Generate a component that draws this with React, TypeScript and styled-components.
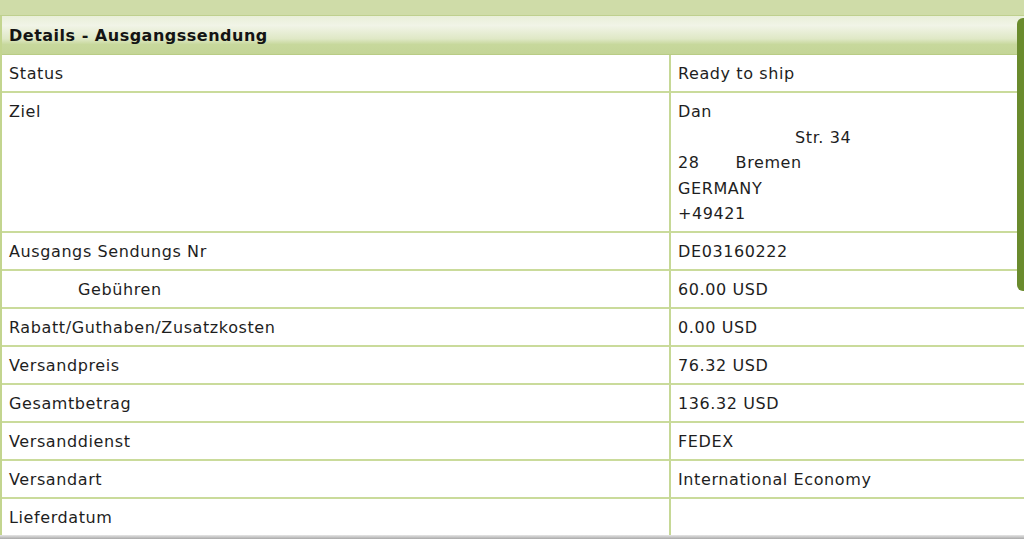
import { Fragment } from "react";
import styled, { createGlobalStyle } from "styled-components";

const GlobalStyle = createGlobalStyle`
  html, body {
    margin: 0;
    padding: 0;
    background-color: #cfdca8;
  }
  #root {
    height: 539px;
  }
`;

const Page = styled.div`
  height: 539px;
  display: flex;
  flex-direction: column;
  overflow: hidden;
  font-family: "DejaVu Sans", Verdana, sans-serif;
  color: #1e1e1e;
`;

const TopBand = styled.div`
  height: 15px;
  flex-shrink: 0;
  background-color: #cfdca8;
  border-bottom: 1px solid #bfd08e;
`;

const Panel = styled.div`
  position: relative;
  flex: 1;
  overflow: hidden;
  background-color: #ffffff;
  border-left: 2px solid #c3d58f;
`;

const Header = styled.div`
  height: 38px;
  display: flex;
  align-items: center;
  padding-left: 7px;
  font-size: 16px;
  font-weight: bold;
  letter-spacing: 0.5px;
  color: #141414;
  background: linear-gradient(
    to bottom,
    #e9efd9 0%,
    #f1f4e7 25%,
    #dfe8c6 60%,
    #c7d89c 75%,
    #c4d597 100%
  );
  border-bottom: 1px solid #b9cc85;
`;

const Table = styled.div`
  display: grid;
  grid-template-columns: 667px 1fr;
`;

const Cell = styled.div<{ $right?: boolean }>`
  padding: 6px 7px 4.5px;
  font-size: 16px;
  line-height: 25.5px;
  letter-spacing: 0.6px;
  border-bottom: 2px solid #cadb9b;
  border-left: ${(p) => (p.$right ? "2px solid #c6d896" : "none")};
  white-space: pre;
`;

const Gap = styled.span<{ $w: number }>`
  display: inline-block;
  width: ${(p) => p.$w}px;
`;

const Line = styled.div``;

const Thumb = styled.div`
  position: absolute;
  top: 2px;
  right: 0;
  width: 7px;
  height: 273px;
  background-color: #6a8b2d;
  border-radius: 6px 0 0 6px;
`;

const BottomBar = styled.div`
  height: 4px;
  flex-shrink: 0;
  background: linear-gradient(to bottom, #e6e6e6, #a9a9a9);
`;

const rows: { label: React.ReactNode; value: React.ReactNode }[] = [
  { label: "Status", value: "Ready to ship" },
  {
    label: "Ziel",
    value: (
      <>
        <Line>Dan</Line>
        <Line>
          <Gap $w={117} />
          Str. 34
        </Line>
        <Line>
          28
          <Gap $w={36} />
          Bremen
        </Line>
        <Line>GERMANY</Line>
        <Line>+49421</Line>
      </>
    ),
  },
  { label: "Ausgangs Sendungs Nr", value: "DE03160222" },
  {
    label: (
      <>
        <Gap $w={69} />
        Gebühren
      </>
    ),
    value: "60.00 USD",
  },
  { label: "Rabatt/Guthaben/Zusatzkosten", value: "0.00 USD" },
  { label: "Versandpreis", value: "76.32 USD" },
  { label: "Gesamtbetrag", value: "136.32 USD" },
  { label: "Versanddienst", value: "FEDEX" },
  { label: "Versandart", value: "International Economy" },
  { label: "Lieferdatum", value: "" },
];

const App = () => {
  return (
    <Page>
      <GlobalStyle />
      <TopBand />
      <Panel>
        <Header>Details - Ausgangssendung</Header>
        <Table>
          {rows.map((r, i) => (
            <Fragment key={i}>
              <Cell>{r.label}</Cell>
              <Cell $right>{r.value}</Cell>
            </Fragment>
          ))}
        </Table>
        <Thumb />
      </Panel>
      <BottomBar />
    </Page>
  );
};

export default App;
